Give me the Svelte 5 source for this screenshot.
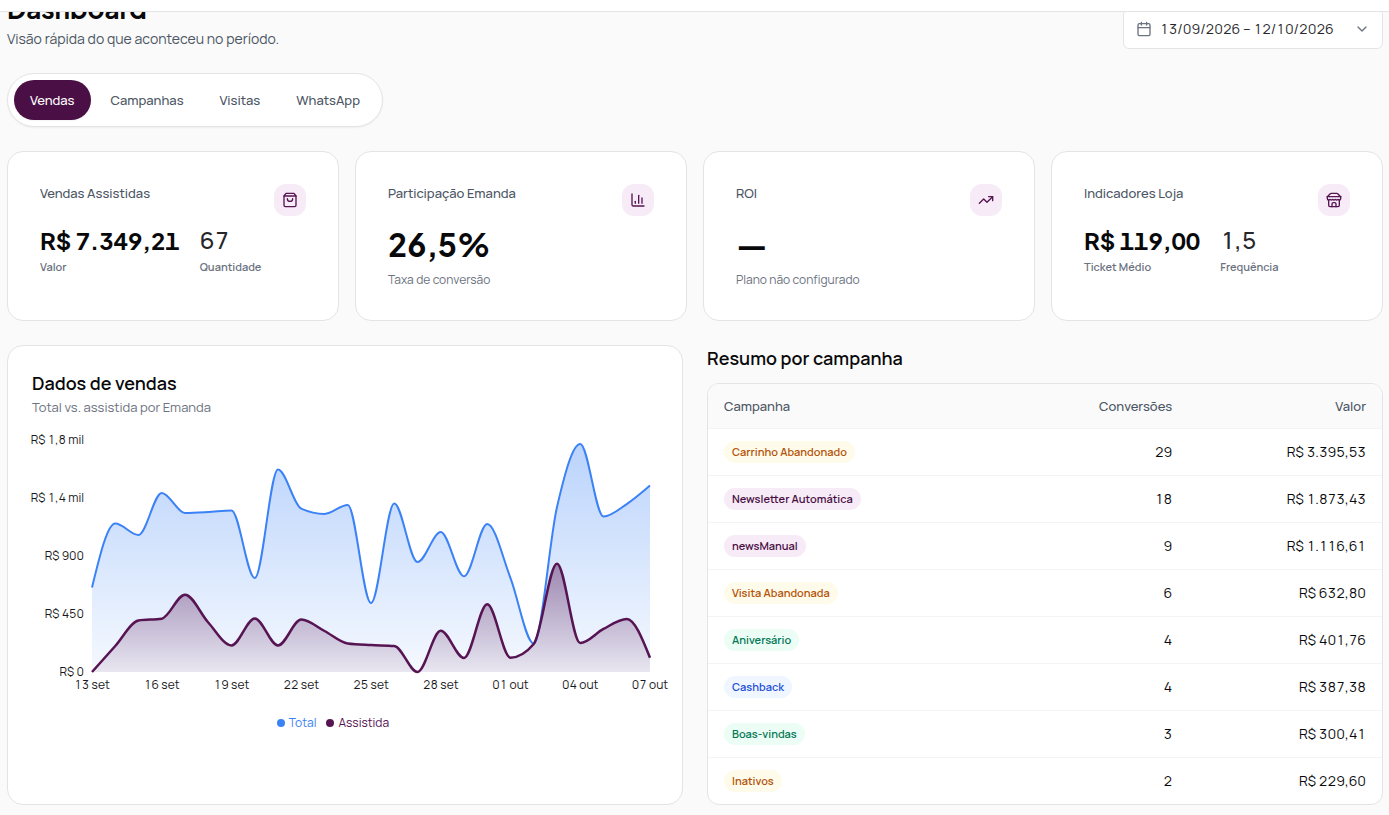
<script lang="ts">
	type Point = [number, number];

	const tabs = ['Vendas', 'Campanhas', 'Visitas', 'WhatsApp'];
	let activeTab = $state('Vendas');

	const icons = {
		bag: ['M6 2 3 6v14a2 2 0 0 0 2 2h14a2 2 0 0 0 2-2V6l-3-4Z', 'M3 6h18', 'M16 10a4 4 0 0 1-8 0'],
		bars: ['M3 3v16a2 2 0 0 0 2 2h16', 'M18 17V9', 'M13 17V5', 'M8 17v-3'],
		trend: ['M22 7 13.5 15.5 8.5 10.5 2 17', 'M16 7h6v6'],
		store: [
			'm2 7 4.41-4.41A2 2 0 0 1 7.83 2h8.34a2 2 0 0 1 1.42.59L22 7',
			'M4 12v8a2 2 0 0 0 2 2h12a2 2 0 0 0 2-2v-8',
			'M15 22v-4a2 2 0 0 0-2-2h-2a2 2 0 0 0-2 2v4',
			'M2 7h20',
			'M22 7v3a2 2 0 0 1-2 2a2.7 2.7 0 0 1-1.59-.63.7.7 0 0 0-.82 0A2.7 2.7 0 0 1 16 12a2.7 2.7 0 0 1-1.59-.63.7.7 0 0 0-.82 0A2.7 2.7 0 0 1 12 12a2.7 2.7 0 0 1-1.59-.63.7.7 0 0 0-.82 0A2.7 2.7 0 0 1 8 12a2.7 2.7 0 0 1-1.59-.63.7.7 0 0 0-.82 0A2.7 2.7 0 0 1 4 12a2 2 0 0 1-2-2V7'
		]
	};

	const cards = [
		{
			title: 'Vendas Assistidas',
			icon: icons.bag,
			pair: [
				{ value: 'R$ 7.349,21', label: 'Valor' },
				{ value: '67', label: 'Quantidade' }
			]
		},
		{ title: 'Participação Emanda', icon: icons.bars, value: '26,5%', caption: 'Taxa de conversão' },
		{ title: 'ROI', icon: icons.trend, value: '—', caption: 'Plano não configurado' },
		{
			title: 'Indicadores Loja',
			icon: icons.store,
			pair: [
				{ value: 'R$ 119,00', label: 'Ticket Médio' },
				{ value: '1,5', label: 'Frequência' }
			]
		}
	];

	const campaigns = [
		{ name: 'Carrinho Abandonado', tone: 'amber', conversions: 29, value: 'R$ 3.395,53' },
		{ name: 'Newsletter Automática', tone: 'purple', conversions: 18, value: 'R$ 1.873,43' },
		{ name: 'newsManual', tone: 'purple', conversions: 9, value: 'R$ 1.116,61' },
		{ name: 'Visita Abandonada', tone: 'amber', conversions: 6, value: 'R$ 632,80' },
		{ name: 'Aniversário', tone: 'green', conversions: 4, value: 'R$ 401,76' },
		{ name: 'Cashback', tone: 'blue', conversions: 4, value: 'R$ 387,38' },
		{ name: 'Boas-vindas', tone: 'green', conversions: 3, value: 'R$ 300,41' },
		{ name: 'Inativos', tone: 'amber', conversions: 2, value: 'R$ 229,60' }
	];

	const total = [
		655, 1152, 1063, 1389, 1234, 1241, 1253, 729, 1571, 1267, 1226, 1296, 535, 1307, 853, 1086,
		742, 1148, 729, 221, 1280, 1769, 1206, 1303, 1447
	];
	const assisted = [
		0, 202, 400, 414, 600, 384, 206, 415, 206, 407, 318, 221, 209, 202, 0, 320, 109, 525, 111,
		217, 840, 225, 334, 411, 111
	];
	const days = ['13 set', '16 set', '19 set', '22 set', '25 set', '28 set', '01 out', '04 out', '07 out'];
	const ticks = [
		{ value: 1800, label: 'R$ 1,8 mil' },
		{ value: 1350, label: 'R$ 1,4 mil' },
		{ value: 900, label: 'R$ 900' },
		{ value: 450, label: 'R$ 450' },
		{ value: 0, label: 'R$ 0' }
	];

	const plot = { left: 60, right: 8, top: 4, height: 232 };
	const baseline = plot.top + plot.height;
	let chartWidth = $state(626);
	let step = $derived((chartWidth - plot.left - plot.right) / (total.length - 1));

	const y = (v: number) => plot.top + plot.height * (1 - v / 1800);
	const toPoints = (series: number[], dx: number): Point[] =>
		series.map((v, i) => [plot.left + i * dx, y(v)]);

	// Monotone cubic, so the curve never overshoots a data point
	function curve(pts: Point[]) {
		const n = pts.length;
		const slopes = pts.slice(1).map((p, i) => (p[1] - pts[i][1]) / (p[0] - pts[i][0]));
		const m = pts.map((_, i) => {
			if (i === 0 || i === n - 1) return 0;
			const a = slopes[i - 1];
			const b = slopes[i];
			return (Math.sign(a) + Math.sign(b)) * Math.min(Math.abs(a), Math.abs(b), Math.abs(a + b) / 4);
		});
		m[0] = (3 * slopes[0] - m[1]) / 2;
		m[n - 1] = (3 * slopes[n - 2] - m[n - 2]) / 2;
		let d = `M${pts[0][0]},${pts[0][1]}`;
		for (let i = 1; i < n; i++) {
			const [x0, y0] = pts[i - 1];
			const [x1, y1] = pts[i];
			const h = (x1 - x0) / 3;
			d += `C${x0 + h},${y0 + h * m[i - 1]} ${x1 - h},${y1 - h * m[i]} ${x1},${y1}`;
		}
		return d;
	}

	let totalLine = $derived(curve(toPoints(total, step)));
	let assistedLine = $derived(curve(toPoints(assisted, step)));
	let closing = $derived(`V${baseline}H${plot.left}Z`);
</script>

<div class="topbar"></div>

<main class="page">
	<header class="header">
		<div>
			<h1>Dashboard</h1>
			<p class="subtitle">Visão rápida do que aconteceu no período.</p>
		</div>
		<button type="button" class="date-range">
			<svg class="icon" viewBox="0 0 24 24" aria-hidden="true">
				<path d="M8 2v4M16 2v4M3 10h18" />
				<rect x="3" y="4" width="18" height="18" rx="2" />
			</svg>
			<span>13/09/2026 – 12/10/2026</span>
			<svg class="icon chevron" viewBox="0 0 24 24" aria-hidden="true"><path d="m6 9 6 6 6-6" /></svg>
		</button>
	</header>

	<nav class="tabs">
		{#each tabs as tab}
			<button type="button" class="tab" class:active={tab === activeTab} onclick={() => (activeTab = tab)}>
				{tab}
			</button>
		{/each}
	</nav>

	<section class="cards">
		{#each cards as card}
			<article class="card stat">
				<div class="stat-head">
					<h2 class="stat-title">{card.title}</h2>
					<span class="stat-icon">
						<svg viewBox="0 0 24 24" aria-hidden="true">
							{#each card.icon as d}<path {d} />{/each}
						</svg>
					</span>
				</div>
				{#if card.pair}
					<div class="pair">
						{#each card.pair as item}
							<div>
								<p class="pair-value">{item.value}</p>
								<p class="pair-label">{item.label}</p>
							</div>
						{/each}
					</div>
				{:else}
					<p class="big-value">{card.value}</p>
					<p class="caption">{card.caption}</p>
				{/if}
			</article>
		{/each}
	</section>

	<div class="panels">
		<section class="card chart-card">
			<h2>Dados de vendas</h2>
			<p class="chart-subtitle">Total vs. assistida por Emanda</p>
			<div class="chart" bind:clientWidth={chartWidth}>
				<svg width={chartWidth} height="256" role="img" aria-label="Total vs. assistida">
					<defs>
						<linearGradient id="fill-total" x1="0" y1="0" x2="0" y2="1">
							<stop offset="0%" stop-color="#3b82f6" stop-opacity="0.35" />
							<stop offset="100%" stop-color="#3b82f6" stop-opacity="0.05" />
						</linearGradient>
						<linearGradient id="fill-assisted" x1="0" y1="0" x2="0" y2="1">
							<stop offset="0%" stop-color="#571453" stop-opacity="0.45" />
							<stop offset="100%" stop-color="#571453" stop-opacity="0.08" />
						</linearGradient>
					</defs>
					<path d={totalLine + closing} fill="url(#fill-total)" />
					<path class="line total" d={totalLine} />
					<path d={assistedLine + closing} fill="url(#fill-assisted)" />
					<path class="line assisted" d={assistedLine} />
					{#each ticks as tick}
						<text x={plot.left - 8} y={y(tick.value) + 4} text-anchor="end">{tick.label}</text>
					{/each}
					{#each days as day, i}
						<text x={plot.left + i * 3 * step} y={baseline + 17} text-anchor="middle">{day}</text>
					{/each}
				</svg>
			</div>
			<ul class="legend">
				<li class="total">Total</li>
				<li class="assisted">Assistida</li>
			</ul>
		</section>

		<section class="summary">
			<h2>Resumo por campanha</h2>
			<div class="table-wrap">
				<table>
					<thead>
						<tr>
							<th scope="col">Campanha</th>
							<th scope="col" class="num">Conversões</th>
							<th scope="col" class="num value-col">Valor</th>
						</tr>
					</thead>
					<tbody>
						{#each campaigns as row}
							<tr>
								<td><span class="badge {row.tone}">{row.name}</span></td>
								<td class="num">{row.conversions}</td>
								<td class="num">{row.value}</td>
							</tr>
						{/each}
					</tbody>
				</table>
			</div>
		</section>
	</div>
</main>

<style>
	:global(body) {
		background: #fafafa;
		color: #09090b;
		font-family: Manrope, Inter, 'Liberation Sans', sans-serif;
		font-size: 14px;
		font-variant-numeric: tabular-nums;
	}

	h1,
	h2,
	p,
	ul {
		margin: 0;
		padding: 0;
	}

	button {
		font: inherit;
		font-variant-numeric: tabular-nums;
		cursor: pointer;
	}

	.topbar {
		position: sticky;
		top: 0;
		z-index: 10;
		height: 11px;
		background: #fff;
		border-bottom: 1px solid #e4e4e7;
	}

	.page {
		display: flex;
		flex-direction: column;
		gap: 24px;
		margin-top: -19px;
		padding: 0 6px 10px 7px;
	}

	.header {
		display: flex;
		justify-content: space-between;
		align-items: flex-end;
	}

	h1,
	.big-value,
	.pair div:first-child .pair-value {
		font-family: 'Plus Jakarta Sans', Manrope, Inter, sans-serif;
		font-weight: 700;
		color: #09090b;
	}

	h1 {
		font-size: 26px;
		line-height: 32px;
	}

	.subtitle {
		margin-top: 4px;
		line-height: 20px;
		color: #4b5563;
	}

	.date-range {
		display: flex;
		align-items: center;
		gap: 8px;
		width: 260px;
		height: 40px;
		padding: 0 12px 1px;
		background: #fff;
		border: 1px solid #e4e4e7;
		border-radius: 6px;
		color: #27272a;
		white-space: nowrap;
	}

	.icon {
		flex: none;
		width: 16px;
		height: 16px;
		fill: none;
		stroke: #6b7280;
		stroke-width: 2;
		stroke-linecap: round;
		stroke-linejoin: round;
	}

	.chevron {
		margin-left: auto;
	}

	.tabs {
		display: flex;
		gap: 4px;
		align-self: flex-start;
		padding: 6px;
		background: #fff;
		border: 1px solid #e4e4e7;
		border-radius: 27px;
		box-shadow: 0 1px 2px rgba(0, 0, 0, 0.05);
	}

	.tab {
		height: 40px;
		padding: 0 16px;
		border: 0;
		border-radius: 20px;
		background: none;
		color: #4b5563;
		font-size: 13px;
		font-weight: 500;
	}

	.tab.active {
		background: #4a1046;
		color: #fff;
		box-shadow: 0 1px 2px rgba(0, 0, 0, 0.05);
	}

	.cards {
		display: grid;
		grid-template-columns: repeat(4, minmax(0, 1fr));
		gap: 16px;
	}

	.card {
		background: #fff;
		border: 1px solid #e4e4e7;
		border-radius: 16px;
	}

	.stat {
		padding: 32px;
	}

	.stat-head {
		display: flex;
		justify-content: space-between;
		margin-bottom: 8px;
	}

	.stat-title {
		font-size: 13px;
		line-height: 18px;
		font-weight: 500;
		color: #4b5563;
	}

	.stat-icon {
		display: grid;
		place-items: center;
		width: 32px;
		height: 32px;
		border-radius: 12px;
		background: #f6ebf6;
	}

	.stat-icon svg {
		width: 16px;
		height: 16px;
		fill: none;
		stroke: #571453;
		stroke-width: 2;
		stroke-linecap: round;
		stroke-linejoin: round;
	}

	.pair {
		display: flex;
		gap: 20px;
	}

	.pair-value {
		font-size: 24px;
		line-height: 32px;
		font-weight: 500;
		color: #27272a;
		white-space: nowrap;
	}

	.pair-label {
		margin-top: 3px;
		font-size: 11px;
		line-height: 16px;
		font-weight: 600;
		color: #6b7280;
	}

	.big-value {
		font-size: 32px;
		line-height: 40px;
	}

	.caption {
		margin-top: 8px;
		font-size: 12px;
		line-height: 16px;
		color: #6b7280;
	}

	.panels {
		display: grid;
		grid-template-columns: repeat(2, minmax(0, 1fr));
		gap: 24px;
	}

	.panels h2 {
		font-size: 18px;
		line-height: 26px;
		font-weight: 600;
	}

	.chart-card {
		padding: 24px;
	}

	.chart-subtitle {
		margin-top: 2px;
		font-size: 13px;
		line-height: 18px;
		color: #6b7280;
	}

	.chart {
		margin-top: 20px;
	}

	.chart svg {
		display: block;
		overflow: visible;
	}

	.chart text {
		font-size: 12px;
		fill: #18181b;
	}

	.line {
		fill: none;
		stroke-width: 2;
	}

	.line.total {
		stroke: #3b82f6;
	}

	.line.assisted {
		stroke: #571453;
		stroke-width: 2.5;
	}

	.legend {
		display: flex;
		justify-content: center;
		gap: 10px;
		margin-top: 22px;
		padding-right: 24px;
		list-style: none;
		font-size: 12px;
		line-height: 18px;
	}

	.legend li {
		display: flex;
		align-items: center;
		gap: 4px;
	}

	.legend li::before {
		content: '';
		width: 8px;
		height: 8px;
		border-radius: 50%;
		background: currentColor;
	}

	.legend .total {
		color: #3b82f6;
	}

	.legend .assisted {
		color: #571453;
	}

	.summary h2 {
		margin-bottom: 12px;
	}

	.table-wrap {
		overflow: hidden;
		background: #fff;
		border: 1px solid #e4e4e7;
		border-radius: 12px;
	}

	table {
		width: 100%;
		border-collapse: collapse;
		table-layout: fixed;
	}

	th {
		height: 44px;
		padding: 0 16px;
		background: #fafafa;
		color: #4b5563;
		font-size: 13px;
		font-weight: 500;
		text-align: left;
	}

	td {
		height: 46px;
		padding: 0 16px;
		border-top: 1px solid #f4f4f5;
	}

	td.num {
		padding-bottom: 2px;
		height: 44px;
	}

	.num {
		text-align: right;
	}

	.value-col {
		width: 24%;
	}

	.badge {
		display: inline-block;
		padding: 0 8px;
		border-radius: 11px;
		font-size: 11px;
		line-height: 22px;
		font-weight: 600;
	}

	.badge.amber {
		background: #fffbeb;
		color: #b45309;
	}

	.badge.purple {
		background: #f6ebf6;
		color: #4a1046;
	}

	.badge.green {
		background: #ecfdf5;
		color: #047857;
	}

	.badge.blue {
		background: #eff6ff;
		color: #1d4ed8;
	}
</style>
